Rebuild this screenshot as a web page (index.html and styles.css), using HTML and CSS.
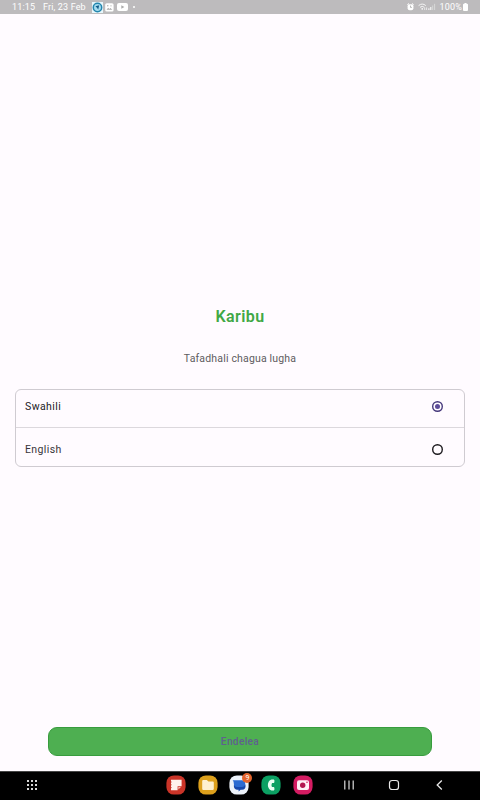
FILE: index.html
```html
<!DOCTYPE html>
<html lang="sw">
<head>
    <meta charset="UTF-8">
    <meta name="viewport" content="width=device-width, initial-scale=1.0">
    <title>Karibu</title>
    <link rel="stylesheet" href="styles.css">
</head>
<body>

<div class="status-bar">
    <span class="time">11:15</span>
    <span class="date">Fri, 23 Feb</span>
    <svg class="app-icon" width="11" height="11" viewBox="0 0 11 11">
        <rect width="11" height="11" fill="#e8f6fb"/>
        <circle cx="5.5" cy="5.5" r="4.2" fill="#a5dcf0" stroke="#2385ad" stroke-width="1.5"/>
        <path d="M3.4 4.2l3.8-1-1 4.2-1.2-1.6z" fill="#125b88"/>
    </svg>
    <svg class="image-icon" width="9" height="9" viewBox="0 0 9 9">
        <rect x="0.2" y="0.2" width="8.4" height="8.4" rx="1.6" fill="#fff"/>
        <path d="M1.5 6.8l1.7-2 1.2 1.2 1-1 1.9 1.8z" fill="#aaa"/>
        <circle cx="2.8" cy="2.8" r="0.7" fill="#aaa"/>
        <circle cx="6" cy="2.8" r="0.6" fill="#aaa"/>
    </svg>
    <svg class="video-icon" width="11" height="8" viewBox="0 0 11 8">
        <rect width="11" height="8" rx="2" fill="#fff"/>
        <path d="M4.3 2.2v3.6L7.4 4z" fill="#aaa"/>
    </svg>
    <span class="more-dot"></span>
    <div class="status-right">
        <svg width="7" height="8" viewBox="0 0 7 8">
            <path d="M0.3 1.8L2 0.5M6.7 1.8L5 0.5" stroke="#fff"/>
            <rect x="0.6" y="1.2" width="5.8" height="6" rx="2" fill="#fff"/>
            <path d="M3.5 2.6v1.8h1.4" fill="none" stroke="#aaa" stroke-width="0.8"/>
        </svg>
        <svg class="wifi-icon" width="10" height="8" viewBox="0 0 10 8">
            <path d="M0.6 2.6Q4.2-0.5 7.8 2.6M2 4.3q2.2-1.8 4.4 0" fill="none" stroke="#f5f5f5" stroke-width="1"/>
            <circle cx="4.2" cy="5.9" r="0.8" fill="#fff"/>
            <path d="M6.7 7V4.6M8.6 4.4V7" stroke="#eee" stroke-width="0.9"/>
        </svg>
        <svg class="signal-icon" width="8" height="8" viewBox="0 0 8 8">
            <path d="M0.9 7V5.3M2.8 7V4" stroke="#fff"/>
            <path d="M4.7 7V2.5M6.6 7V0.8" stroke="#dedede" stroke-width="0.8"/>
        </svg>
        <span class="battery-text">100%</span>
        <svg width="5" height="8" viewBox="0 0 5 8">
            <path d="M1.5 0h2v0.8H4a1 1 0 0 1 1 1V7a1 1 0 0 1-1 1H1a1 1 0 0 1-1-1V1.8a1 1 0 0 1 1-1h0.5z" fill="#fff"/>
        </svg>
    </div>
</div>

<div class="content">
    <h1 class="title">Karibu</h1>
    <p class="subtitle">Tafadhali chagua lugha</p>

    <div class="languages">
        <label class="language">
            <span>Swahili</span>
            <input type="radio" name="language" value="sw" checked>
        </label>
        <label class="language">
            <span class="language-name">English</span>
            <input type="radio" name="language" value="en">
        </label>
    </div>

    <button class="continue-btn">Endelea</button>
</div>

<div class="nav-bar">
    <svg class="apps-btn" width="12" height="12" viewBox="0 0 12 12" fill="#d8d8d8">
        <rect x="1" y="1" width="2" height="2"/>
        <rect x="5" y="1" width="2" height="2"/>
        <rect x="9" y="1" width="2" height="2"/>
        <rect x="1" y="5" width="2" height="2"/>
        <rect x="5" y="5" width="2" height="2"/>
        <rect x="9" y="5" width="2" height="2"/>
        <rect x="1" y="9" width="2" height="2"/>
        <rect x="5" y="9" width="2" height="2"/>
        <rect x="9" y="9" width="2" height="2"/>
    </svg>

    <div class="dock">
        <div class="dock-app">
            <svg width="20" height="20" viewBox="0 0 20 20">
                <rect x="0.4" y="0.4" width="19.2" height="19.2" rx="7.5" fill="#ca3428"/>
                <path d="M5 4.8h10.6v6.4h-4v4H5z" fill="#fff2ec"/>
                <path d="M12.3 14.6v-2.7H15z" fill="#f3b9b0"/>
                <path d="M4 7h1.8M4 9.8h1.8M4 12.6h1.8" stroke="#ca3428" stroke-width="0.7"/>
            </svg>
        </div>
        <div class="dock-app">
            <svg width="20" height="20" viewBox="0 0 20 20">
                <rect x="0.4" y="0.4" width="19.2" height="19.2" rx="7.5" fill="#dda01c"/>
                <path d="M4.2 6a1 1 0 0 1 1-1h3.6l1.6 1.5h4.4a1 1 0 0 1 1 1v6.3a1.2 1.2 0 0 1-1.2 1.2H5.4a1.2 1.2 0 0 1-1.2-1.2z" fill="#fff0cf"/>
            </svg>
        </div>
        <div class="dock-app">
            <svg width="20" height="20" viewBox="0 0 20 20">
                <rect x="0.4" y="0.4" width="19.2" height="19.2" rx="7.5" fill="#edf2fa"/>
                <path d="M8 7.5h5a3.6 3.6 0 0 1 0 7.2h-1.4l-2 1.7v-1.7H9A3.6 3.6 0 0 1 8 7.5z" fill="#1648ad"/>
                <path d="M3.6 5.2h9.2a3.4 3.4 0 0 1 0 6.8H8.2a3.4 3.4 0 0 1-3.4-3.4c0-1.4-0.3-2.2-1.2-3.4z" fill="#2c6bd2"/>
            </svg>
            <span class="badge">9</span>
        </div>
        <div class="dock-app">
            <svg width="20" height="20" viewBox="0 0 20 20">
                <rect x="0.4" y="0.4" width="19.2" height="19.2" rx="7.5" fill="#0ca063"/>
                <path d="M10.5 4.6h2.3l0.6 0.7v2l-0.6 0.6h-1.7c-0.8 1.4-0.8 3 0 4.2h1.7l0.6 0.7v2l-0.6 0.7h-2.3C5.7 14.3 5.7 5.8 10.5 4.6z" fill="#e9fff4"/>
            </svg>
        </div>
        <div class="dock-app">
            <svg width="20" height="20" viewBox="0 0 20 20">
                <rect x="0.4" y="0.4" width="19.2" height="19.2" rx="7.5" fill="#d41c62"/>
                <rect x="4" y="5.3" width="12" height="9.6" rx="2" fill="#fff0f5"/>
                <circle cx="9.7" cy="10.3" r="2.7" fill="#b3174f"/>
                <circle cx="14" cy="7.2" r="0.8" fill="#d41c62"/>
            </svg>
        </div>
    </div>

    <div class="nav-buttons">
        <svg width="12" height="12" viewBox="0 0 12 12">
            <path d="M1.8 1.5v9M6 1.5v9M10.2 1.5v9" stroke="#ddd" stroke-width="1.2"/>
        </svg>
        <svg width="12" height="12" viewBox="0 0 12 12">
            <rect x="1.5" y="1.5" width="9" height="9" rx="2.6" fill="none" stroke="#e8e8e8" stroke-width="1.2"/>
        </svg>
        <svg width="12" height="12" viewBox="0 0 12 12">
            <path d="M8.8 1.5L4.2 6 8.8 10.5" fill="none" stroke="#e8e8e8" stroke-width="1.3"/>
        </svg>
    </div>
</div>

</body>
</html>
```
FILE: styles.css
```css
* {
    box-sizing: border-box;
}

body {
    margin: 0;
    height: 800px;
    display: flex;
    flex-direction: column;
    font-family: Roboto, sans-serif;
    background-color: #fffbff;
    overflow: hidden;
}

svg {
    display: block;
    flex-shrink: 0;
}

.status-bar {
    height: 14px;
    padding: 0 12px;
    display: flex;
    align-items: center;
    background-color: #bdbbbd;
    color: #fff;
    font-size: 9px;
    line-height: 14px;
    white-space: nowrap;
}
.time {
    width: 31px;
    letter-spacing: 0.15px;
}
.date {
    width: 49px;
    letter-spacing: 0.15px;
}
.image-icon {
    margin-left: 2px;
}
.video-icon {
    margin-left: 3px;
}
.more-dot {
    width: 2px;
    height: 2px;
    margin-left: 5px;
    border-radius: 50%;
    background-color: #fff;
}
.status-right {
    margin-left: auto;
    display: flex;
    align-items: center;
}
.wifi-icon {
    margin-left: 4px;
}
.battery-text {
    margin: 0 1px 0 3px;
    letter-spacing: 0.2px;
}

.content {
    flex: 1;
    display: flex;
    flex-direction: column;
    padding: 292px 15px 15px;
}
.title {
    margin: 0;
    color: #3fa845;
    font-size: 16px;
    font-weight: 600;
    line-height: 22px;
    letter-spacing: 0.4px;
    text-align: center;
}
.subtitle {
    margin: 23px 0 22px;
    color: #5e5b60;
    font-size: 10.5px;
    line-height: 16px;
    letter-spacing: 0.17px;
    text-align: center;
}

.languages {
    height: 78px;
    border: 1px solid #cfcbd1;
    border-radius: 6px;
}
.language {
    display: flex;
    align-items: center;
    justify-content: space-between;
    height: 37px;
    padding: 0 21px 4px 9px;
    color: #1d1b1f;
    font-size: 10.5px;
    letter-spacing: 0.4px;
}
.language + .language {
    height: 39px;
    padding: 4px 21px 0 9px;
    border-top: 1px solid #dcd8dd;
}
.language-name {
    color: #39363b;
}
.language input {
    appearance: none;
    display: grid;
    place-items: center;
    width: 11px;
    height: 11px;
    margin: 0;
    border-radius: 50%;
    box-shadow: inset 0 0 0 1.4px #1d1b1f;
}
.language input:checked {
    box-shadow: inset 0 0 0 1.4px #46397c;
}
.language input:checked::before {
    content: "";
    width: 5px;
    height: 5px;
    border-radius: 50%;
    background-color: #5d4c99;
}

.continue-btn {
    height: 29px;
    margin: auto 33px 0;
    padding: 0;
    border: 1px solid #389c3e;
    border-radius: 9px;
    background-color: #4eaf51;
    color: #5f6090;
    font-family: inherit;
    font-size: 10px;
    font-weight: 500;
    letter-spacing: 0.4px;
}

.nav-bar {
    display: flex;
    align-items: center;
    height: 29px;
    padding: 0 35px 2px 26px;
    border-top: 1px solid #454545;
    background-color: #000;
}
.dock {
    display: flex;
    gap: 11.7px;
    margin-left: 128px;
}
.dock-app {
    position: relative;
}
.badge {
    position: absolute;
    top: -2px;
    right: -3px;
    width: 10px;
    height: 10px;
    border-radius: 50%;
    background-color: #e3642c;
    color: #fff;
    font-size: 7px;
    line-height: 10px;
    text-align: center;
}
.nav-buttons {
    display: flex;
    gap: 33px;
    margin-left: auto;
}
```
